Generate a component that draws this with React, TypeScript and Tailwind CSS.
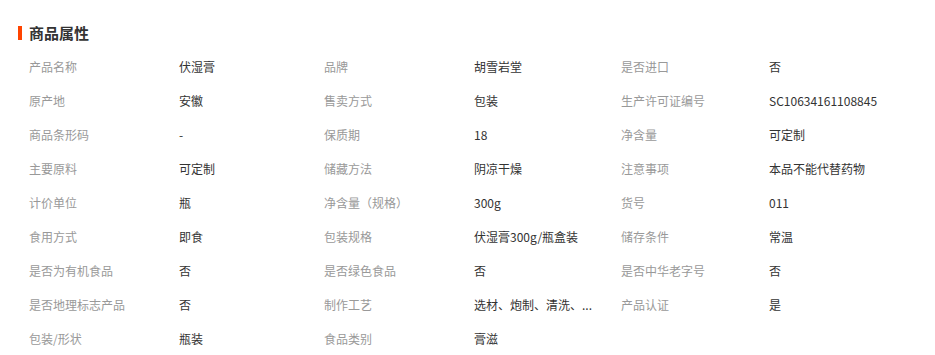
import React from "react";

const rows: [string, string][][] = [
  [["产品名称", "伏湿膏"], ["品牌", "胡雪岩堂"], ["是否进口", "否"]],
  [["原产地", "安徽"], ["售卖方式", "包装"], ["生产许可证编号", "SC10634161108845"]],
  [["商品条形码", "-"], ["保质期", "18"], ["净含量", "可定制"]],
  [["主要原料", "可定制"], ["储藏方法", "阴凉干燥"], ["注意事项", "本品不能代替药物"]],
  [["计价单位", "瓶"], ["净含量（规格）", "300g"], ["货号", "011"]],
  [["食用方式", "即食"], ["包装规格", "伏湿膏300g/瓶盒装"], ["储存条件", "常温"]],
  [["是否为有机食品", "否"], ["是否绿色食品", "否"], ["是否中华老字号", "否"]],
  [["是否地理标志产品", "否"], ["制作工艺", "选材、炮制、清洗、..."], ["产品认证", "是"]],
  [["包装/形状", "瓶装"], ["食品类别", "膏滋"]],
];

export default function App() {
  return (
    <div
      className="w-[935px] h-[355px] bg-white overflow-hidden"
      style={{ fontFamily: '"Microsoft YaHei", "Noto Sans CJK SC", "Noto Sans", sans-serif' }}
    >
      <div className="pt-[24px] pl-[18px] flex items-center h-[42px]">
        <div className="w-[4px] h-[14px] bg-[#ff4400]" />
        <div className="ml-[7px] text-[15px] font-bold text-[#333] leading-[18px]">商品属性</div>
      </div>
      <div className="pl-[29px] pt-[8px]">
        {rows.map((row, i) => (
          <div
            key={i}
            className="grid grid-cols-[150px_145px_150px_147px_148px_1fr] h-[34px] items-center text-[12px] leading-[16px]"
          >
            {row.map(([k, v], j) => (
              <React.Fragment key={j}>
                <div className="text-[#999] whitespace-nowrap">{k}</div>
                <div className="text-[#333] whitespace-nowrap">{v}</div>
              </React.Fragment>
            ))}
          </div>
        ))}
      </div>
    </div>
  );
}
